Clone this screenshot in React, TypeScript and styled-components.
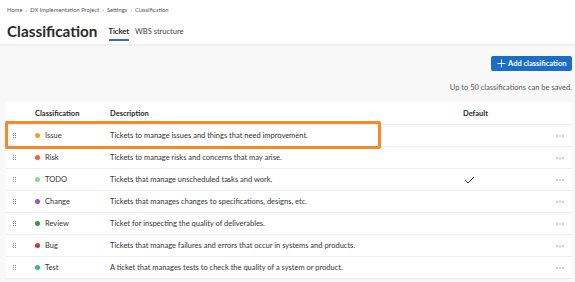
import React from "react";
import styled, { createGlobalStyle } from "styled-components";

const Global = createGlobalStyle`
  html, body { margin: 0; padding: 0; background: #f8f8f8; }
  body { font-family: Lato, "Noto Sans", sans-serif; color: #333; }
`;

const Page = styled.div`
  width: 575px;
  height: 282px;
  overflow: hidden;
  background: #f8f8f8;
`;

const Header = styled.header`
  background: #fff;
  padding: 4px 7px 0 7px;
  height: 40px;
  border-bottom: 2px solid #f0f0f0;
`;

const Breadcrumb = styled.nav`
  display: flex;
  align-items: center;
  gap: 3px;
  font-size: 5.8px;
  color: #555;
  height: 10px;
`;

const Sep = styled.span`
  color: #777;
  font-size: 6px;
`;

const TitleRow = styled.div`
  display: flex;
  align-items: flex-end;
  gap: 11px;
  margin-top: 8px;
`;

const Title = styled.h1`
  margin: 0;
  font-size: 15.3px;
  font-weight: 700;
  color: #2a2a2a;
  line-height: 19px;
`;

const Tabs = styled.div`
  display: flex;
  gap: 6px;
`;

const Tab = styled.div<{ $active?: boolean }>`
  font-size: 7.5px;
  font-weight: ${(p) => (p.$active ? 700 : 400)};
  color: ${(p) => (p.$active ? "#222" : "#444")};
  padding-bottom: 3px;
  border-bottom: 2px solid ${(p) => (p.$active ? "#2f6fc0" : "transparent")};
`;

const Content = styled.main`
  padding: 10px 3px 0 6px;
`;

const Toolbar = styled.div`
  display: flex;
  justify-content: flex-end;
`;

const AddButton = styled.button`
  display: flex;
  align-items: center;
  gap: 2px;
  height: 15px;
  width: 81px;
  padding: 0 0 0 6px;
  border: none;
  border-radius: 2px;
  background: #1b6dc6;
  color: #fff;
  font-family: Lato, "Noto Sans", sans-serif;
  font-size: 7.5px;
  font-weight: 700;
`;

const Note = styled.div`
  text-align: right;
  font-size: 7.5px;
  color: #555;
  margin-top: 12px;
  height: 13px;
`;

const Panel = styled.div`
  position: relative;
  background: #fff;
  margin-top: 6px;
`;

const cols = "29px 75px 347px 91px 24px";

const HeadRow = styled.div`
  display: grid;
  grid-template-columns: ${cols};
  align-items: center;
  height: 22px;
  border-bottom: 1px solid #eee;
  font-size: 7.5px;
  font-weight: 700;
  color: #2a2a2a;
`;

const Row = styled.div`
  display: grid;
  grid-template-columns: ${cols};
  align-items: center;
  height: 21px;
  border-bottom: 1px solid #eee;
  font-size: 7.5px;
  color: #333;
`;

const Handle = styled.span`
  display: grid;
  grid-template-columns: 1px 1px;
  grid-template-rows: 1px 1px 1px;
  gap: 1px;
  margin-left: 7px;
  span { width: 1px; height: 1px; background: #8a8a8a; }
`;

const NameCell = styled.span`
  display: flex;
  align-items: center;
  gap: 5px;
`;

const Dot = styled.span<{ $c: string }>`
  width: 5px;
  height: 5px;
  border-radius: 50%;
  background: ${(p) => p.$c};
`;

const DefaultCell = styled.span`
  padding-left: 6px;
  display: flex;
  align-items: center;
`;

const More = styled.span`
  display: flex;
  justify-content: center;
  align-items: center;
`;

const Highlight = styled.div`
  position: absolute;
  box-sizing: border-box;
  left: -1px;
  top: 19px;
  width: 376px;
  height: 28px;
  border: 3px solid #f68a2a;
  border-radius: 2px;
  pointer-events: none;
`;

const rows = [
  { name: "Issue", c: "#e9a32a", d: "Tickets to manage issues and things that need improvement." },
  { name: "Risk", c: "#f0602e", d: "Tickets to manage risks and concerns that may arise." },
  { name: "TODO", c: "#92d492", d: "Tickets that manage unscheduled tasks and work.", def: true },
  { name: "Change", c: "#a54cc6", d: "Tickets that manages changes to specifications, designs, etc." },
  { name: "Review", c: "#3b963a", d: "Ticket for inspecting the quality of deliverables." },
  { name: "Bug", c: "#d7303c", d: "Tickets that manage failures and errors that occur in systems and products." },
  { name: "Test", c: "#2ec46c", d: "A ticket that manages tests to check the quality of a system or product." },
];

const Check = () => (
  <svg width="11" height="8" viewBox="0 0 11 8" style={{ marginLeft: 1 }}>
    <path d="M1 4 L4 7 L10 1" fill="none" stroke="#333" strokeWidth="1" />
  </svg>
);

const Dots = () => (
  <svg width="8" height="2" viewBox="0 0 8 2">
    <circle cx="1" cy="1" r="0.7" fill="#888" />
    <circle cx="4" cy="1" r="0.7" fill="#888" />
    <circle cx="7" cy="1" r="0.7" fill="#888" />
  </svg>
);

export default function App() {
  return (
    <Page>
      <Global />
      <Header>
        <Breadcrumb>
          <span>Home</span>
          <Sep>›</Sep>
          <span>DX Implementation Project</span>
          <Sep>›</Sep>
          <span>Settings</span>
          <Sep>›</Sep>
          <span>Classification</span>
        </Breadcrumb>
        <TitleRow>
          <Title>Classification</Title>
          <Tabs>
            <Tab $active>Ticket</Tab>
            <Tab>WBS structure</Tab>
          </Tabs>
        </TitleRow>
      </Header>
      <Content>
        <Toolbar>
          <AddButton>
            <svg width="9" height="9" viewBox="0 0 9 9">
              <path d="M4.5 0.5 V8.5 M0.5 4.5 H8.5" stroke="#fff" strokeWidth="0.9" />
            </svg>
            Add classification
          </AddButton>
        </Toolbar>
        <Note>Up to 50 classifications can be saved.</Note>
        <Panel>
          <HeadRow>
            <span />
            <span>Classification</span>
            <span>Description</span>
            <DefaultCell>Default</DefaultCell>
            <span />
          </HeadRow>
          {rows.map((r) => (
            <Row key={r.name}>
              <Handle>
                <span /><span /><span /><span /><span /><span />
              </Handle>
              <NameCell>
                <Dot $c={r.c} />
                {r.name}
              </NameCell>
              <span>{r.d}</span>
              <DefaultCell>{r.def ? <Check /> : null}</DefaultCell>
              <More>
                <Dots />
              </More>
            </Row>
          ))}
          <Highlight />
        </Panel>
      </Content>
    </Page>
  );
}
